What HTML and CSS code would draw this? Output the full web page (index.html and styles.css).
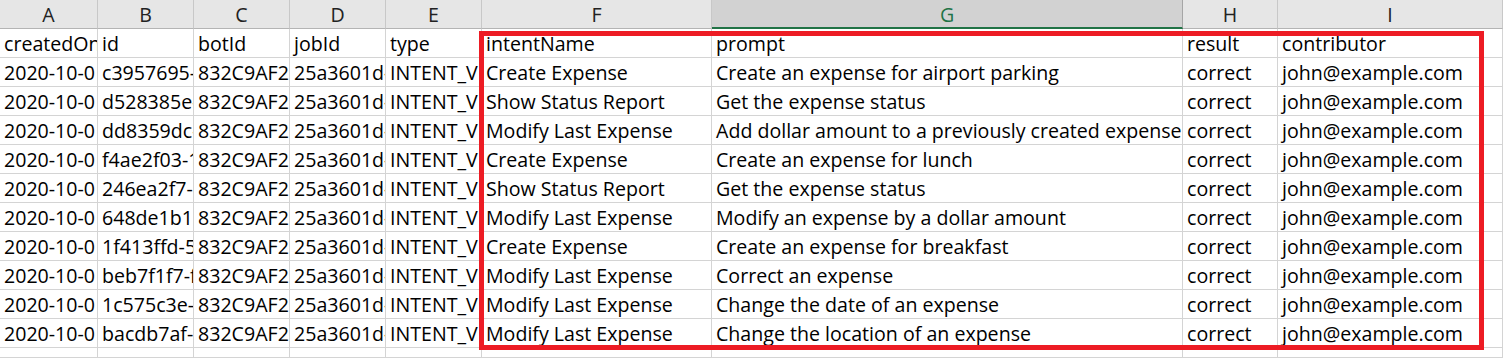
FILE: index.html
```html
<!DOCTYPE html>
<html lang="en">
<head>
<meta charset="utf-8">
<title>Sheet</title>
<link rel="stylesheet" href="styles.css">
</head>
<body>
<div class="sheet">
  <div class="hd">A</div><div class="hd">B</div><div class="hd">C</div><div class="hd">D</div><div class="hd">E</div><div class="hd">F</div><div class="hd sel">G</div><div class="hd">H</div><div class="hd">I</div>

  <div class="c">createdOn</div><div class="c">id</div><div class="c">botId</div><div class="c">jobId</div><div class="c">type</div><div class="c">intentName</div><div class="c">prompt</div><div class="c">result</div><div class="c">contributor</div>

  <div class="c">2020-10-0</div><div class="c">c3957695-</div><div class="c">832C9AF2-</div><div class="c">25a3601d-</div><div class="c">INTENT_V</div><div class="c">Create Expense</div><div class="c">Create an expense for airport parking</div><div class="c">correct</div><div class="c">john@example.com</div>

  <div class="c">2020-10-0</div><div class="c">d528385e-</div><div class="c">832C9AF2-</div><div class="c">25a3601d-</div><div class="c">INTENT_V</div><div class="c">Show Status Report</div><div class="c">Get the expense status</div><div class="c">correct</div><div class="c">john@example.com</div>

  <div class="c">2020-10-0</div><div class="c">dd8359dc-</div><div class="c">832C9AF2-</div><div class="c">25a3601d-</div><div class="c">INTENT_V</div><div class="c">Modify Last Expense</div><div class="c">Add dollar amount to a previously created expense</div><div class="c">correct</div><div class="c">john@example.com</div>

  <div class="c">2020-10-0</div><div class="c">f4ae2f03-1</div><div class="c">832C9AF2-</div><div class="c">25a3601d-</div><div class="c">INTENT_V</div><div class="c">Create Expense</div><div class="c">Create an expense for lunch</div><div class="c">correct</div><div class="c">john@example.com</div>

  <div class="c">2020-10-0</div><div class="c">246ea2f7-</div><div class="c">832C9AF2-</div><div class="c">25a3601d-</div><div class="c">INTENT_V</div><div class="c">Show Status Report</div><div class="c">Get the expense status</div><div class="c">correct</div><div class="c">john@example.com</div>

  <div class="c">2020-10-0</div><div class="c">648de1b1-</div><div class="c">832C9AF2-</div><div class="c">25a3601d-</div><div class="c">INTENT_V</div><div class="c">Modify Last Expense</div><div class="c">Modify an expense by a dollar amount</div><div class="c">correct</div><div class="c">john@example.com</div>

  <div class="c">2020-10-0</div><div class="c">1f413ffd-5</div><div class="c">832C9AF2-</div><div class="c">25a3601d-</div><div class="c">INTENT_V</div><div class="c">Create Expense</div><div class="c">Create an expense for breakfast</div><div class="c">correct</div><div class="c">john@example.com</div>

  <div class="c">2020-10-0</div><div class="c">beb7f1f7-f</div><div class="c">832C9AF2-</div><div class="c">25a3601d-</div><div class="c">INTENT_V</div><div class="c">Modify Last Expense</div><div class="c">Correct an expense</div><div class="c">correct</div><div class="c">john@example.com</div>

  <div class="c">2020-10-0</div><div class="c">1c575c3e-</div><div class="c">832C9AF2-</div><div class="c">25a3601d-</div><div class="c">INTENT_V</div><div class="c">Modify Last Expense</div><div class="c">Change the date of an expense</div><div class="c">correct</div><div class="c">john@example.com</div>

  <div class="c">2020-10-0</div><div class="c">bacdb7af-</div><div class="c">832C9AF2-</div><div class="c">25a3601d-</div><div class="c">INTENT_V</div><div class="c">Modify Last Expense</div><div class="c">Change the location of an expense</div><div class="c">correct</div><div class="c">john@example.com</div>

  <div class="c"></div><div class="c"></div><div class="c"></div><div class="c"></div><div class="c"></div><div class="c"></div><div class="c"></div><div class="c"></div><div class="c"></div>
</div>
<div class="highlight"></div>
</body>
</html>
```

FILE: styles.css
```css
html, body {
  margin: 0;
  padding: 0;
  background: #ffffff;
}
body {
  position: relative;
  width: 1503px;
  height: 358px;
  overflow: hidden;
  font-family: "Open Sans", "Noto Sans", sans-serif;
  font-size: 19.6px;
  color: #000000;
}
.sheet {
  display: grid;
  grid-template-columns: 98px 96px 96px 96px 96px 230px 471px 95px 225px;
  grid-template-rows: repeat(12, 29px) 10px;
  overflow: hidden;
}
.hd {
  box-sizing: border-box;
  background: #e6e6e6;
  border-right: 1px solid #c8c8c8;
  border-bottom: 1px solid #b4b4b4;
  text-align: center;
  line-height: 26px;
  padding-top: 2px;
  color: #222222;
}
.hd.sel {
  background: #d2d2d2;
  color: #217346;
  border-right-color: #a6a6a6;
  border-bottom: 2px solid #217346;
}
.c {
  box-sizing: border-box;
  border-right: 1px solid #d4d4d4;
  border-bottom: 1px solid #d4d4d4;
  padding: 1px 0 0 4px;
  line-height: 27px;
  white-space: nowrap;
  overflow: hidden;
}
.highlight {
  position: absolute;
  left: 479px;
  top: 31px;
  width: 1005px;
  height: 319px;
  box-sizing: border-box;
  border: 5px solid #ed1c24;
}
```
